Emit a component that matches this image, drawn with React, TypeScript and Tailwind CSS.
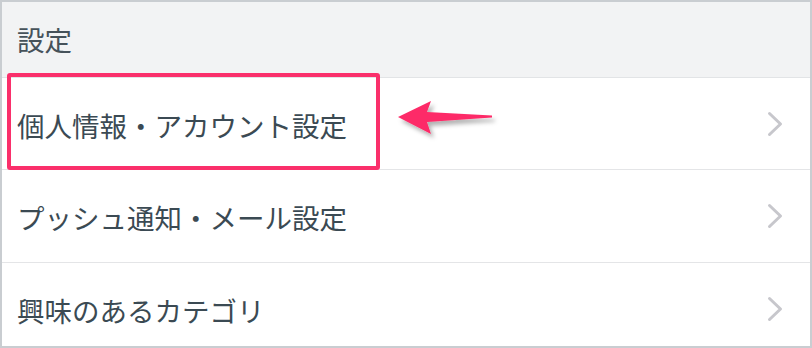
const rows = [
  { label: '個人情報・アカウント設定', h: 'h-[92px]' },
  { label: 'プッシュ通知・メール設定', h: 'h-[93px]' },
  { label: '興味のあるカテゴリ', h: 'h-[93px]' },
];

const Chevron = () => (
  <svg width="16" height="26" viewBox="0 0 16 26" fill="none">
    <polyline
      points="2.5,2.5 13.5,13 2.5,23.5"
      stroke="#c7c7cc"
      strokeWidth="3"
      strokeLinecap="round"
      strokeLinejoin="round"
    />
  </svg>
);

export default function App() {
  return (
    <div
      className="relative w-[812px] h-[348px] overflow-hidden border-2 border-[#c9cdd1] bg-white text-[#3b4a53]"
      style={{ fontFamily: '"Hiragino Sans", "Noto Sans CJK JP", sans-serif' }}
    >
      {/* section header */}
      <div className="flex h-[76px] items-center border-b border-[#e2e4e6] bg-[#f2f3f4] pl-[15px] text-[27.5px] text-[#46525a]">
        設定
      </div>

      {rows.map((row) => (
        <div
          key={row.label}
          className={`flex ${row.h} shrink-0 items-center justify-between border-b border-[#e4e5e7] pl-[15px] pr-[27px] text-[27.5px]`}
        >
          <span className="pt-[4px]">{row.label}</span>
          <Chevron />
        </div>
      ))}

      {/* annotation box */}
      <div className="absolute left-[5px] top-[71px] h-[97px] w-[373px] rounded-[3px] border-4 border-[#fa2f6b]" />

      {/* annotation arrow */}
      <svg
        className="absolute left-[386px] top-[90px]"
        width="120"
        height="60"
        viewBox="386 90 120 60"
      >
        <defs>
          <filter id="sh" x="-20%" y="-40%" width="140%" height="180%">
            <feDropShadow dx="3" dy="4" stdDeviation="2" floodColor="#000" floodOpacity="0.3" />
          </filter>
        </defs>
        <polygon
          points="396,115 429,99 425,110 490,113.5 490,115.5 425,120 429,132"
          fill="#fd2b67"
          filter="url(#sh)"
        />
      </svg>
    </div>
  );
}
